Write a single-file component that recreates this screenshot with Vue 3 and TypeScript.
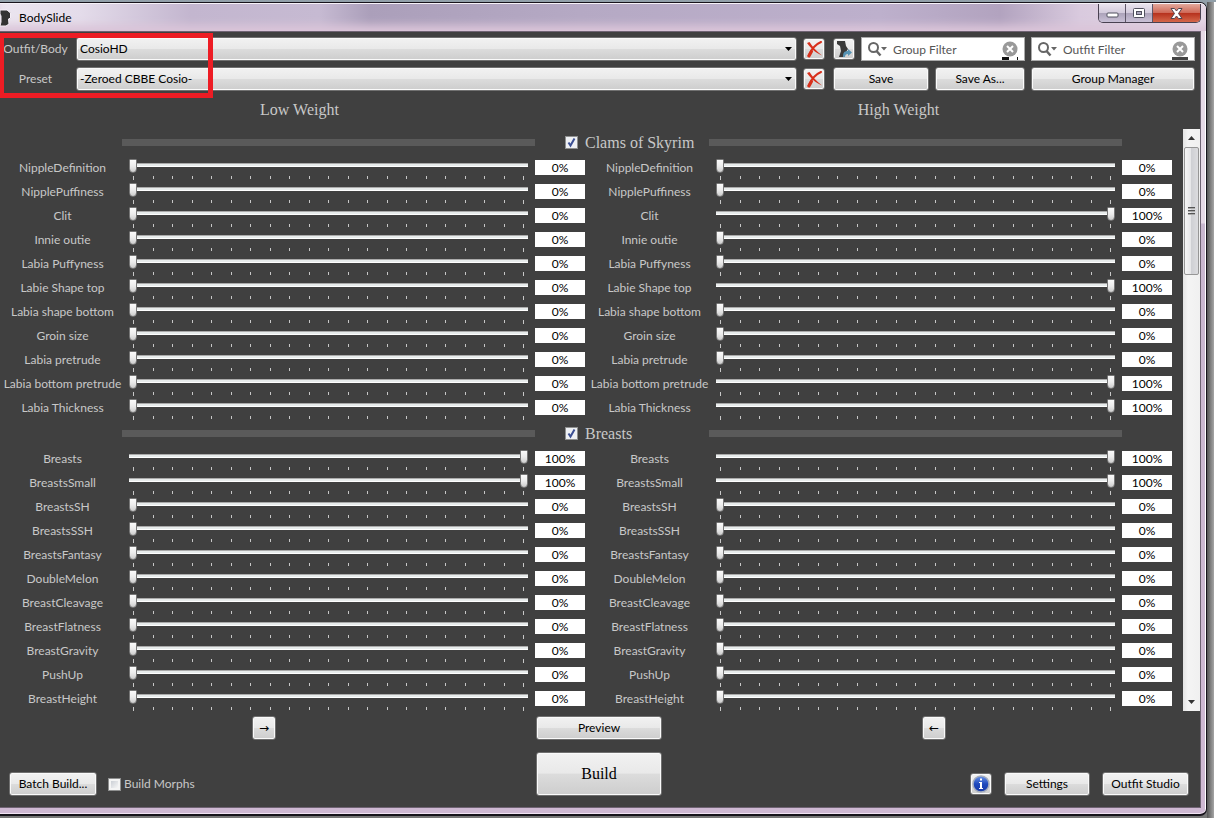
<script setup lang="ts">
import { reactive, ref } from 'vue'

interface Slider { name: string; low: number; high: number }
interface Category { name: string; shown: boolean; sliders: Slider[] }

const s = (name: string, low = 0, high = 0): Slider => ({ name, low, high })

const categories = reactive<Category[]>([
  {
    name: 'Clams of Skyrim',
    shown: true,
    sliders: [
      s('NippleDefinition'), s('NipplePuffiness'), s('Clit', 0, 100), s('Innie outie'),
      s('Labia Puffyness'), s('Labie Shape top', 0, 100), s('Labia shape bottom'), s('Groin size'),
      s('Labia pretrude'), s('Labia bottom pretrude', 0, 100), s('Labia Thickness', 0, 100),
    ],
  },
  {
    name: 'Breasts',
    shown: true,
    sliders: [
      s('Breasts', 100, 100), s('BreastsSmall', 100, 100), s('BreastsSH'), s('BreastsSSH'),
      s('BreastsFantasy'), s('DoubleMelon'), s('BreastCleavage'), s('BreastFlatness'),
      s('BreastGravity'), s('PushUp'), s('BreastHeight'),
    ],
  },
])

const sides: ('low' | 'high')[] = ['low', 'high']
const outfit = ref('CosioHD')
const preset = ref('-Zeroed CBBE Cosio-')
const groupFilter = ref('')
const outfitFilter = ref('')
const buildMorphs = ref(false)

function setValue(slider: Slider, side: 'low' | 'high', event: Event) {
  const n = parseInt((event.target as HTMLInputElement).value, 10)
  slider[side] = Number.isNaN(n) ? 0 : Math.min(100, Math.max(0, n))
}
</script>

<template>
  <div class="desktop">
    <div class="window">
      <header class="titlebar">
        <svg class="app-icon" width="12" height="18" viewBox="0 0 12 18"><path d="M0 1h7l3.500 3v5l-2 1 .5 5-3 2H0l1-4V7L0 5z" fill="#333" stroke="#f4eef6" stroke-width="1" /></svg>
        <h1>BodySlide</h1>
        <div class="caption">
          <button type="button" class="min" aria-label="Minimize"><svg width="13" height="6"><rect x="1" y="1" width="11" height="4" rx="1" fill="#fff" stroke="#50505e" /></svg></button>
          <button type="button" class="max" aria-label="Maximize"><svg width="12" height="10"><rect x=".5" y=".5" width="11" height="9" rx="1" fill="#fff" stroke="#50505e" /><rect x="3.5" y="3.5" width="5" height="3" fill="#aaa6bc" stroke="#50505e" /></svg></button>
          <button type="button" class="close" aria-label="Close"><svg width="13" height="11"><path d="M1 .5h3.500l2 2.500 2-2.500H12L8.500 5.500 12 10.500H8.500l-2-2.500-2 2.500H1l3.500-5z" fill="#fff" stroke="#50434f" /></svg></button>
        </div>
      </header>

      <main class="client">
        <div class="toolbar">
          <label for="outfit">Outfit/Body</label>
          <div class="combo">
            <select id="outfit" v-model="outfit"><option>CosioHD</option></select>
            <svg width="7" height="4"><path d="M0 0h7L3.500 4z" fill="#000" /></svg>
          </div>
          <button type="button" class="btn icon" aria-label="Delete outfit">
            <svg width="17" height="17" viewBox="0 0 17 17"><path d="M1 2l2.500-1c3 5 7 9 12.500 13.500C9 11.500 5 7.500 1 2z" fill="#d8301c" /><path d="M15 1C8 4 5 9 2.500 14.500" fill="none" stroke="#d8301c" stroke-width="2" stroke-linecap="round" /><path d="M5.500 10.500L3 15" stroke="#d8301c" stroke-width="3" stroke-linecap="round" /></svg>
          </button>
          <div class="tools">
            <button type="button" class="btn icon" aria-label="Edit body">
              <svg width="18" height="18" viewBox="0 0 18 18"><path d="M2 1h8l1 5 2 3-2 3-2 5H4l2-6-1-5-3-2z" fill="#3a3a3a" /><path d="M8 17c0-4 1-6 5-6V9l4 3.500-4 3.500v-2c-2 0-3 1-3 3z" fill="#5693b4" /></svg>
            </button>
            <label class="search">
              <svg class="lens" width="22" height="15" viewBox="0 0 22 15"><circle cx="6.500" cy="5.500" r="4.500" fill="none" stroke="#666" stroke-width="2" /><path d="M9.500 9l4 4.500" stroke="#666" stroke-width="2.500" /><path d="M14 5h6l-3 3.500z" fill="#666" /></svg>
              <input v-model="groupFilter" type="text" placeholder="Group Filter" aria-label="Group Filter" />
              <svg class="clear" width="16" height="19" viewBox="0 0 16 19"><circle cx="8" cy="8" r="7.500" fill="#999" /><path d="M5 5l6 6M11 5l-6 6" stroke="#fff" stroke-width="2" /><path d="M0 16h7v3H0zM15 16h1v3h-1z" fill="#111" /></svg>
            </label>
          </div>
          <label class="search">
            <svg class="lens" width="22" height="15" viewBox="0 0 22 15"><circle cx="6.500" cy="5.500" r="4.500" fill="none" stroke="#666" stroke-width="2" /><path d="M9.500 9l4 4.500" stroke="#666" stroke-width="2.500" /><path d="M14 5h6l-3 3.500z" fill="#666" /></svg>
            <input v-model="outfitFilter" type="text" placeholder="Outfit Filter" aria-label="Outfit Filter" />
            <svg class="clear" width="16" height="19" viewBox="0 0 16 19"><circle cx="8" cy="8" r="7.500" fill="#999" /><path d="M5 5l6 6M11 5l-6 6" stroke="#fff" stroke-width="2" /><path d="M0 16h16v3H0z" fill="#444" /></svg>
          </label>

          <label for="preset">Preset</label>
          <div class="combo">
            <select id="preset" v-model="preset"><option>-Zeroed CBBE Cosio-</option></select>
            <svg width="7" height="4"><path d="M0 0h7L3.500 4z" fill="#000" /></svg>
          </div>
          <button type="button" class="btn icon" aria-label="Delete preset">
            <svg width="17" height="17" viewBox="0 0 17 17"><path d="M1 2l2.500-1c3 5 7 9 12.500 13.500C9 11.500 5 7.500 1 2z" fill="#d8301c" /><path d="M15 1C8 4 5 9 2.500 14.500" fill="none" stroke="#d8301c" stroke-width="2" stroke-linecap="round" /><path d="M5.500 10.500L3 15" stroke="#d8301c" stroke-width="3" stroke-linecap="round" /></svg>
          </button>
          <div class="saves">
            <button type="button" class="btn save">Save</button>
            <button type="button" class="btn save-as">Save As...</button>
          </div>
          <button type="button" class="btn">Group Manager</button>
        </div>
        <div class="highlight"></div>

        <div class="weights"><h2>Low Weight</h2><h2>High Weight</h2></div>

        <div class="scroller">
          <div class="list">
            <section v-for="cat in categories" :key="cat.name">
              <div class="category">
                <span class="bar first"></span>
                <label>
                  <span class="tick">
                    <input v-model="cat.shown" type="checkbox" />
                    <svg v-if="cat.shown" width="13" height="13" viewBox="0 0 13 13"><path d="M3.500 6.500l2 3 4-7" fill="none" stroke="#3b4f94" stroke-width="2" /></svg>
                  </span>
                  <span>{{ cat.name }}</span>
                </label>
                <span class="bar"></span>
              </div>
              <div v-for="sl in cat.sliders" :key="sl.name" class="row">
                <div v-for="side in sides" :key="side" class="half">
                  <label :for="`${side}-${sl.name}`">{{ sl.name }}</label>
                  <div class="slide">
                    <input :id="`${side}-${sl.name}`" v-model.number="sl[side]" type="range" min="0" max="100" />
                    <div class="ticks"><i v-for="n in 21" :key="n"></i></div>
                  </div>
                  <input class="value" type="text" :value="`${sl[side]}%`" :aria-label="`${sl.name} ${side} weight`" @change="setValue(sl, side, $event)" />
                </div>
              </div>
            </section>
          </div>
          <div class="scrollbar">
            <svg width="17" height="18"><path d="M5 11h7L8.500 7z" fill="#333" /></svg>
            <div class="thumb"><i></i><i></i><i></i></div>
            <svg width="17" height="18"><path d="M5 7h7l-3.500 4z" fill="#333" /></svg>
          </div>
        </div>

        <footer>
          <div class="mid"><button type="button" class="btn arrow">→</button></div>
          <button type="button" class="btn">Preview</button>
          <div class="mid"><button type="button" class="btn arrow">←</button></div>
          <div class="left">
            <button type="button" class="btn batch">Batch Build...</button>
            <label class="morphs"><input v-model="buildMorphs" type="checkbox" />Build Morphs</label>
          </div>
          <button type="button" class="btn build">Build</button>
          <div class="right">
            <button type="button" class="btn icon" aria-label="About">
              <svg width="18" height="18" viewBox="0 0 18 18"><defs><linearGradient id="info" x2="0" y2="1"><stop offset="0" stop-color="#6a94e8" /><stop offset=".5" stop-color="#1f49bd" /><stop offset="1" stop-color="#1638a8" /></linearGradient></defs><circle cx="9" cy="9" r="8" fill="url(#info)" stroke="#a5adbd" stroke-width="1.500" /><path d="M7 7h3v6h1v1H7v-1h1V8H7zM8 3.500h2v2H8z" fill="#fff" /></svg>
            </button>
            <button type="button" class="btn settings">Settings</button>
            <button type="button" class="btn studio">Outfit Studio</button>
          </div>
        </footer>
      </main>
    </div>
    <div class="behind"></div>
  </div>
</template>

<style>
body { margin: 0; }
</style>

<style scoped>
* { box-sizing: border-box; }
.desktop {
  display: flex;
  min-height: 100vh;
  padding-top: 2px;
  background: linear-gradient(#93a1ab 0, #7d858b 24px, #808080 60px, #777 100%);
  font: 12px/16px Lato, "Open Sans", sans-serif;
  color: #c8c8c8;
}
.window {
  flex: 1;
  display: flex;
  flex-direction: column;
  min-width: 0;
  margin-bottom: 3px;
  padding: 0 5px 6px 0;
  border: solid #17131b;
  border-width: 1px 1px 2px 0;
  border-radius: 0 7px 7px 0;
  background: linear-gradient(#e6d9e6 0, #e6d9e6 220px, #c9b7cf 221px, #cfb9d3 100%);
  box-shadow: inset -1px 1px #fff, inset 0 -1px #f2e4f4;
}
.behind {
  width: 9px;
  background: linear-gradient(90deg, #555 0, #a6a6a6 7px, #fff 7px);
}
.titlebar {
  display: flex;
  align-items: center;
  height: 28px;
  margin-right: -5px;
  padding-right: 5px;
  border-top: 1px solid #f6f2f8;
  border-radius: 0 6px 0 0;
  background: linear-gradient(90deg, #ebe5ef 0, #e4dcea 80px, #c3b6cf 190px, #c6bad2 320px, #ab9fba 370px, #b5a9c4 580px, #bdb0cc 880px, #b2a3bf 1000px, #d9cade 1080px, #e6d9e6 100%);
  box-shadow: inset 0 -9px 8px -3px #dbc5d9;
}
.app-icon { flex: none; }
h1 { flex: 1; margin: 0 0 0 7px; font-size: 12px; font-weight: 400; color: #000; }
.caption {
  display: flex;
  align-self: flex-start;
  border: 1px solid #494151;
  border-top: 0;
  border-radius: 0 0 5px 5px;
  overflow: hidden;
}
.caption button {
  display: flex;
  align-items: center;
  justify-content: center;
  width: 27px;
  height: 18px;
  padding: 0;
  border: 0;
  border-right: 1px solid #5e5668;
  background: linear-gradient(#e9e3ee 0, #d3cbdc 48%, #aba2b9 50%, #c9c0d6 100%);
}
.caption .min { padding-top: 4px; }
.caption .close { width: 47px; border: 0; background: linear-gradient(#e3a89c 0, #cf6a58 48%, #b5301c 50%, #d5674a 100%); }
.client {
  position: relative;
  flex: 1;
  display: flex;
  flex-direction: column;
  border: solid #6f6373;
  border-width: 1px 1px 1px 0;
  background: #404040;
}
.toolbar {
  display: grid;
  grid-template-columns: 69px minmax(0, 1fr) 24px 192px 164px;
  gap: 6px;
  padding: 5px 5px 0 1px;
  align-items: center;
}
.toolbar > label:not(.search) { text-align: center; }
.combo { position: relative; height: 24px; }
.combo select {
  width: 100%;
  height: 24px;
  padding: 0 20px 0 3px;
  appearance: none;
}
.combo svg { position: absolute; right: 5px; top: 10px; pointer-events: none; }
.btn, .combo select {
  border: 1px solid #707070;
  border-radius: 3px;
  background: linear-gradient(#f2f2f2 0, #e9e9e9 48%, #dcdcdc 50%, #cdcdcd 100%);
  box-shadow: inset 0 0 0 1px #fafafa;
  color: #000;
  font: inherit;
}
.btn { height: 24px; padding: 0; }
.btn.icon { display: flex; flex: none; align-items: center; justify-content: center; width: 22px; height: 22px; }
.tools, .saves { display: flex; align-items: center; gap: 6px; }
.saves .save { flex: 1; }
.saves .save-as { width: 90px; }
.tools .search { flex: 1; }
.search {
  display: flex;
  align-items: center;
  min-width: 0;
  height: 24px;
  padding: 0 6px 0 5px;
  background: #fff;
  border: 1px solid #aaa;
}
.search svg { flex: none; }
.search input {
  flex: 1;
  min-width: 0;
  height: 20px;
  margin-left: 4px;
  padding: 0;
  border: 0;
  outline: 0;
  background: none;
  font: inherit;
  color: #000;
}
.search input::placeholder { color: #555; opacity: 1; }
.clear { align-self: flex-end; }
.highlight {
  position: absolute;
  left: 0;
  top: 1px;
  width: 213px;
  height: 65px;
  border: 5px solid #ed1c24;
  border-left-width: 4px;
  pointer-events: none;
}
.weights { display: grid; grid-template-columns: 1fr 1fr; height: 38px; padding: 8px 2px 0 0; }
h2 { margin: 0; font: 16px/22px "Liberation Serif", serif; text-align: center; }
.scroller { display: flex; }
.list { flex: 1; min-width: 0; }
.category {
  display: grid;
  grid-template-columns: 122px 1fr 174px 1fr 61px;
  align-items: center;
  height: 27px;
}
.category label { display: flex; align-items: center; gap: 7px; padding-left: 30px; font: 16px/22px "Liberation Serif", serif; }
.bar { height: 7px; background: #5a5a5a; }
.bar.first { grid-column: 2; }
.tick { position: relative; display: flex; }
.tick svg { position: absolute; left: 0; top: 0; pointer-events: none; }
input[type='checkbox'] {
  flex: none;
  width: 13px;
  height: 13px;
  margin: 0;
  appearance: none;
  border: 1px solid #8e8f8f;
  background: linear-gradient(135deg, #cbcfd5, #f6f6f6) content-box, #f4f4f4;
  padding: 2px;
}
input[type='checkbox']:checked { background: #eef0f4; }
.row { display: grid; grid-template-columns: 1fr 1fr; padding-right: 9px; }
.half {
  display: grid;
  grid-template-columns: 125px minmax(0, 1fr) 50px;
  height: 24px;
  padding-right: 2px;
}
.half label { line-height: 24px; text-align: center; white-space: nowrap; }
.slide { padding: 3px 7px 0 4px; }
.slide input {
  display: block;
  width: 100%;
  height: 14px;
  margin: 0;
  appearance: none;
  background: linear-gradient(#aaa 0 1px, #e8ecec 1px 3px, #fff 3px) 0 4px / 100% 4px no-repeat;
}
.slide input::-webkit-slider-thumb {
  appearance: none;
  width: 8px;
  height: 14px;
  border: 1px solid #777;
  border-radius: 1px 1px 4px 4px;
  background: linear-gradient(#fafafa, #ececec 50%, #ccc);
}
.ticks { display: flex; justify-content: space-between; height: 4px; margin: 3px 4px 0 4px; }
.ticks i { width: 1px; height: 3px; background: #c8c8c8; }
.ticks i:first-child, .ticks i:last-child { height: 4px; }
.value {
  width: 50px;
  height: 15px;
  margin-top: 4px;
  padding: 0;
  border: 0;
  background: #fff;
  color: #000;
  font: inherit;
  line-height: 15px;
  text-align: center;
}
.scrollbar { display: flex; flex-direction: column; width: 17px; background: linear-gradient(90deg, #e4e4e4, #f4f4f4 5px, #f0f0f0); }
.scrollbar svg { display: block; flex: none; }
.scrollbar > svg:last-child { margin-top: auto; }
.thumb {
  display: flex;
  flex-direction: column;
  align-items: center;
  justify-content: center;
  gap: 1px;
  height: 22%;
  margin: 0 1px;
  border: 1px solid #969696;
  border-radius: 2px;
  background: linear-gradient(90deg, #f5f5f5, #e6e6e8 45%, #cfd0d4 50%, #dcdcdf);
}
.thumb i { width: 7px; height: 2px; border-top: 1px solid #555; background: #aaa; }
footer {
  flex: 1;
  display: grid;
  grid-template-columns: minmax(0, 1fr) 126px minmax(0, 1fr);
  align-content: start;
  gap: 12px 8px;
  padding: 5px 2px 11px 0;
}
.mid { display: flex; justify-content: center; }
.arrow { width: 24px; font-family: "DejaVu Sans", sans-serif; }
.left, .right { display: flex; align-items: flex-end; }
.left { gap: 11px; padding-left: 9px; }
.right { justify-content: flex-end; gap: 12px; padding-right: 9px; }
.right .icon { margin-bottom: 1px; }
.batch { width: 88px; }
.settings { width: 86px; }
.studio { width: 87px; }
.morphs { display: flex; align-items: center; gap: 3px; height: 24px; }
.build { height: 44px; font: 16px/22px "Liberation Serif", serif; }
</style>
